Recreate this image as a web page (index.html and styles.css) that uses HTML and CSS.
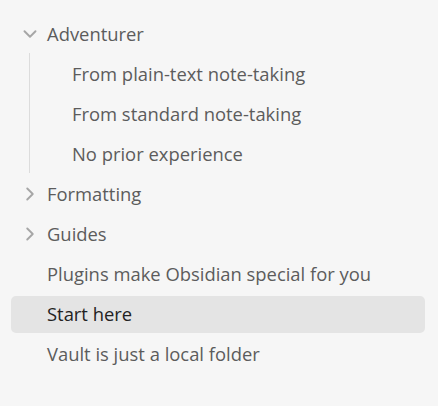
FILE: index.html
```html
<!DOCTYPE html>
<html lang="en">
<head>
<meta charset="utf-8">
<title>Files</title>
<link rel="stylesheet" href="styles.css">
</head>
<body>
<nav class="tree">
  <div class="row folder">
    <svg class="chev" viewBox="0 0 24 24" width="22" height="22"><path d="m6 9 6 6 6-6"/></svg>
    <span class="label">Adventurer</span>
  </div>
  <div class="children">
    <div class="row child"><span class="label">From plain-text note-taking</span></div>
    <div class="row child"><span class="label">From standard note-taking</span></div>
    <div class="row child"><span class="label">No prior experience</span></div>
  </div>
  <div class="row folder">
    <svg class="chev" viewBox="0 0 24 24" width="22" height="22"><path d="m9 18 6-6-6-6"/></svg>
    <span class="label">Formatting</span>
  </div>
  <div class="row folder">
    <svg class="chev" viewBox="0 0 24 24" width="22" height="22"><path d="m9 18 6-6-6-6"/></svg>
    <span class="label">Guides</span>
  </div>
  <div class="row file"><span class="label">Plugins make Obsidian special for you</span></div>
  <div class="row file active"><span class="label">Start here</span></div>
  <div class="row file"><span class="label">Vault is just a local folder</span></div>
</nav>
</body>
</html>
```
FILE: styles.css
```css
html, body {
  margin: 0;
  background: #f6f6f6;
}

body {
  font-family: "Open Sans", "Noto Sans", sans-serif;
  font-size: 18.4px;
  color: #5c5c5c;
}

.tree {
  display: flex;
  flex-direction: column;
  padding: 16px 13px 0 11px;
}

.row {
  display: flex;
  align-items: center;
  height: 37px;
  margin-bottom: 3px;
  border-radius: 5px;
  box-sizing: border-box;
  padding-bottom: 2px;
  white-space: nowrap;
}

.folder {
  padding-left: 8px;
}

.file {
  padding-left: 36px;
}

.chev {
  flex: none;
  margin-right: 6px;
  fill: none;
  stroke: #a6a6a6;
  stroke-width: 2.1;
  stroke-linecap: round;
  stroke-linejoin: round;
}

.children {
  display: flex;
  flex-direction: column;
  margin: -3px 0 3px 18px;
  padding-top: 3px;
  border-left: 1px solid #dcdcdc;
}

.children .row:last-child {
  margin-bottom: 0;
}

.child {
  padding-left: 42px;
}

.active {
  background: #e4e4e4;
  color: #222222;
}
```
